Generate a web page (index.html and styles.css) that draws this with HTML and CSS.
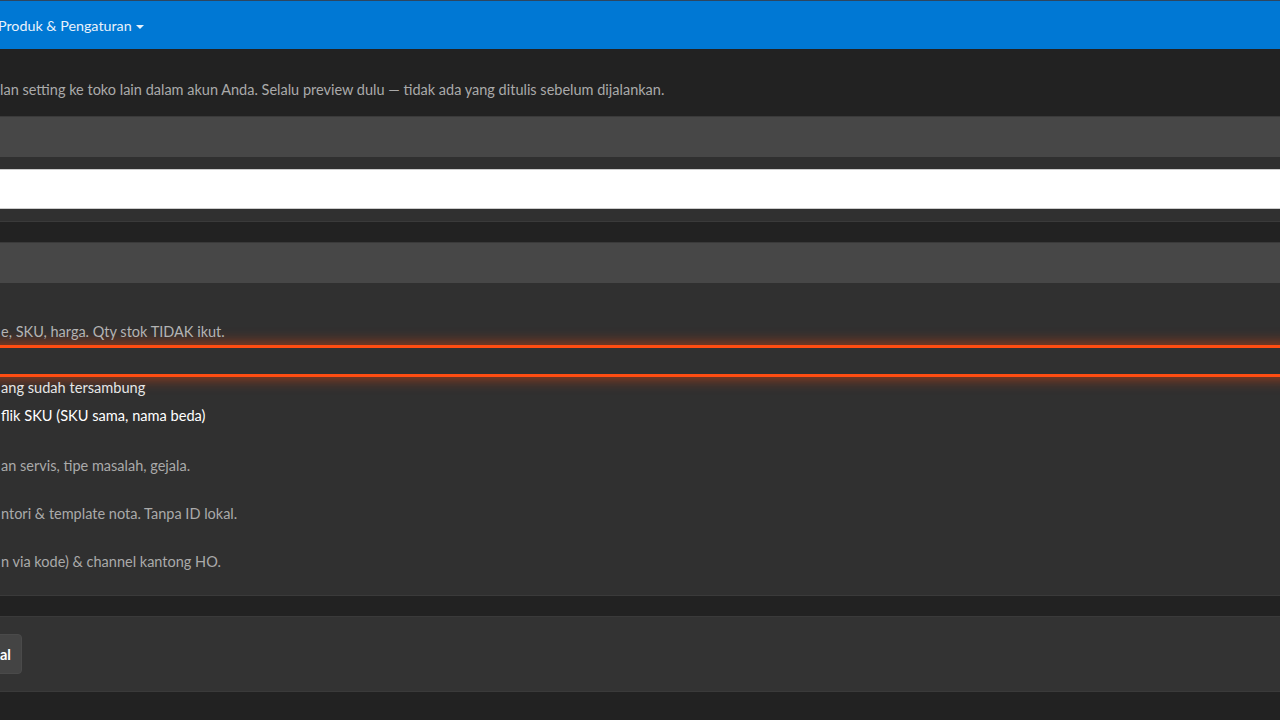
FILE: index.html
```html
<!DOCTYPE html>
<html lang="id">
<head>
    <meta charset="UTF-8">
    <meta name="viewport" content="width=device-width, initial-scale=1.0">
    <title>Salin Produk &amp; Pengaturan</title>
    <link rel="stylesheet" href="styles.css">
</head>
<body>
    <!-- navigasi atas -->
    <nav class="topbar">
        <a class="nav-link" href="#">Produk &amp; Pengaturan <span class="caret"></span></a>
    </nav>

    <main class="page">
        <p class="intro">lan setting ke toko lain dalam akun Anda. Selalu preview dulu — tidak ada yang ditulis sebelum dijalankan.</p>

        <!-- pilih toko tujuan -->
        <section class="panel">
            <div class="panel-head"></div>
            <div class="panel-body">
                <input class="field" type="text">
            </div>
        </section>

        <!-- apa yang disalin -->
        <section class="panel">
            <div class="panel-head"></div>
            <div class="panel-body options">
                <div class="opt-label"></div>
                <p class="opt-desc first">e, SKU, harga. Qty stok TIDAK ikut.</p>
                <div class="opt-row focused"></div>
                <label class="check">ang sudah tersambung</label>
                <label class="check strong">flik SKU (SKU sama, nama beda)</label>

                <div class="opt">
                    <div class="opt-label"></div>
                    <p class="opt-desc">an servis, tipe masalah, gejala.</p>
                </div>
                <div class="opt">
                    <div class="opt-label"></div>
                    <p class="opt-desc">ntori &amp; template nota. Tanpa ID lokal.</p>
                </div>
                <div class="opt">
                    <div class="opt-label"></div>
                    <p class="opt-desc">n via kode) &amp; channel kantong HO.</p>
                </div>
            </div>
        </section>

        <!-- aksi -->
        <section class="panel actions">
            <button class="btn">al</button>
        </section>
    </main>
</body>
</html>
```

FILE: styles.css
```css
html, body {
    margin: 0;
    padding: 0;
    overflow: hidden;
}
body {
    font-family: Lato, "Noto Sans", sans-serif;
    background-color: #222;
    color: #ddd;
    height: 720px;
}
.topbar {
    background-color: #0078d4;
    border-top: 1px solid #2d4660;
    height: 48px;
    line-height: 48px;
}
.nav-link {
    margin-left: -2px;
    font-size: 14.3px;
    color: #e8f1fb;
    text-decoration: none;
}
.caret {
    display: inline-block;
    width: 0;
    height: 0;
    margin-left: 1px;
    border-top: 4px solid #e8f1fb;
    border-left: 4px solid transparent;
    border-right: 4px solid transparent;
    vertical-align: middle;
}
.page {
    margin: 0 -1px;
}
.intro {
    margin: 31px 1px 16px;
    font-size: 14.5px;
    line-height: 20px;
    color: #aaa;
}
.panel {
    border: 1px solid #3a3a3a;
    background-color: #303030;
    margin-bottom: 20px;
}
.panel-head {
    height: 40px;
    background-color: #474747;
}
.panel-body {
    padding: 12px 0 12px 1px;
}
.field {
    display: block;
    box-sizing: border-box;
    width: calc(100% + 4px);
    height: 40px;
    margin-left: -3px;
    border: 1px solid #ccc;
    background-color: #fff;
}
.options {
    padding: 11px 0 19px 1px;
}
.opt-label {
    height: 20px;
}
.opt-desc {
    margin: 4px 0 4px;
    font-size: 14.5px;
    line-height: 20px;
    color: #aaa;
}
.opt-desc.first {
    margin: 8px 0 0;
    color: #b3b3b3;
}
.opt-row {
    height: 26px;
    margin: 4px -20px 0;
}
.focused {
    border: 2px solid #ff4d12;
    box-shadow: 0 0 0 1px #ff4d12, 0 0 14px 3px rgba(255, 72, 10, 0.5);
}
.check {
    display: block;
    margin-top: 2px;
    font-size: 14.6px;
    line-height: 20px;
    color: #e6e6e6;
}
.check.strong {
    margin-top: 8px;
    margin-bottom: 6px;
    color: #fff;
}
.actions {
    background-color: #333;
    padding: 17px 0;
}
.btn {
    display: block;
    height: 40px;
    margin-left: -11px;
    padding: 0 10px;
    font-family: Lato, "Noto Sans", sans-serif;
    font-size: 14.5px;
    font-weight: 700;
    color: #fff;
    background-color: #444;
    border: 1px solid #4a4a4a;
    border-radius: 4px;
}
```
